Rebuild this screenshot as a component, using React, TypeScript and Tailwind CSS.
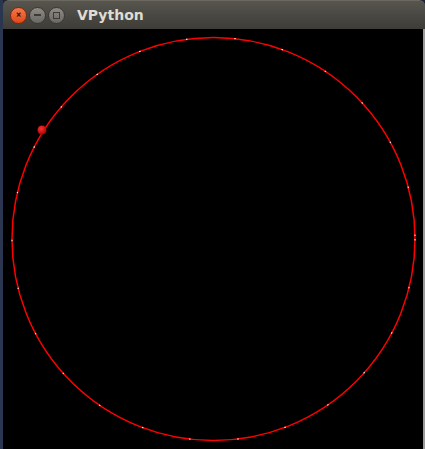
export default function App() {
  return (
    <div className="w-[425px] h-[449px] flex bg-[#1d2433] overflow-hidden" style={{ fontFamily: '"Ubuntu", "DejaVu Sans", sans-serif' }}>
      <div className="w-[3px] bg-[#2a3550]" />
      <div className="flex-1 flex flex-col">
        <div className="h-[29px] rounded-t-[6px] bg-gradient-to-b from-[#57554e] to-[#3d3c37] border-t border-[#6a685f] flex items-center pl-[7px] gap-[2px]">
          <div className="w-[17px] h-[17px] rounded-full bg-gradient-to-b from-[#f5764a] to-[#de4816] border border-[#7a2a10] flex items-center justify-center text-[#3a1a10] text-[10px] font-bold leading-none">×</div>
          <div className="w-[17px] h-[17px] rounded-full bg-gradient-to-b from-[#8d8b84] to-[#6a6862] border border-[#3a3935] flex items-center justify-center">
            <div className="w-[7px] h-[2px] bg-[#3b3a36]" />
          </div>
          <div className="w-[17px] h-[17px] rounded-full bg-gradient-to-b from-[#8d8b84] to-[#6a6862] border border-[#3a3935] flex items-center justify-center">
            <div className="w-[7px] h-[7px] border-[1.5px] border-[#3b3a36]" />
          </div>
          <div className="ml-[10px] text-[#dfdbd2] text-[14px] font-bold" style={{ fontFamily: '"DejaVu Sans", sans-serif' }}>VPython</div>
        </div>
        <div className="flex-1 flex">
          <div className="flex-1 bg-black">
            <svg width="420" height="420" viewBox="0 0 420 420" className="block">
              <circle cx="210.5" cy="210" r="201.5" fill="none" stroke="#ff0000" strokeWidth="1.5" />
              <circle cx="210.5" cy="210" r="201.5" fill="none" stroke="#ffffff" strokeOpacity="0.85" strokeWidth="1.2" strokeDasharray="1.5 47" />
              <defs>
                <radialGradient id="ball" cx="0.4" cy="0.35" r="0.7">
                  <stop offset="0" stopColor="#ff3030" />
                  <stop offset="1" stopColor="#a00000" />
                </radialGradient>
              </defs>
              <circle cx="39" cy="101" r="4.5" fill="url(#ball)" />
            </svg>
          </div>
          <div className="w-[2px] bg-[#9a9a9a]" />
        </div>
      </div>
    </div>
  );
}
